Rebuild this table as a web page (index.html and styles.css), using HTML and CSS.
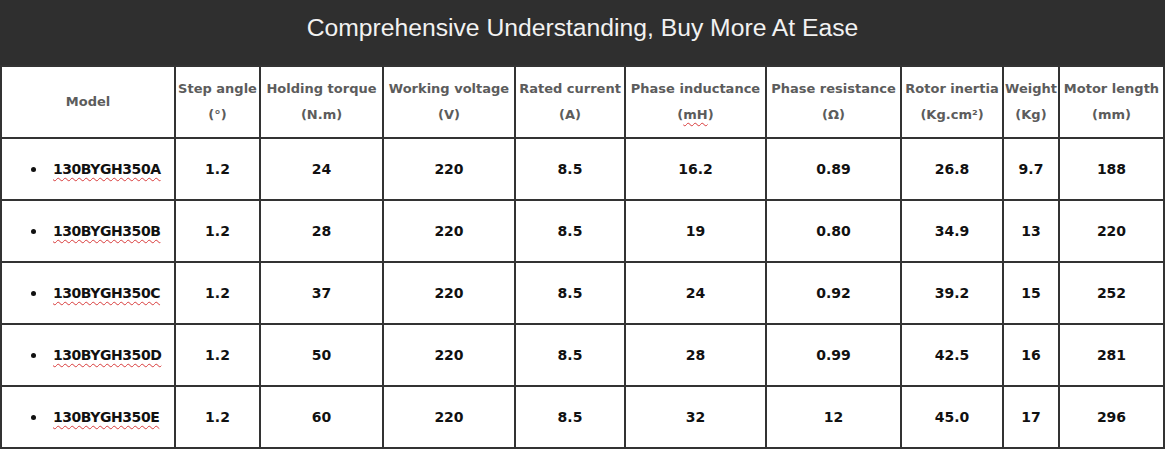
FILE: index.html
```html
<!DOCTYPE html>
<html lang="en">
<head>
<meta charset="utf-8">
<title>Motor specifications</title>
<link rel="stylesheet" href="styles.css">
</head>
<body>
<div class="spec">
  <div class="spec-title">Comprehensive Understanding, Buy More At Ease</div>
  <table class="spec-table">
    <colgroup>
      <col class="c-model"><col class="c-step"><col class="c-hold"><col class="c-volt"><col class="c-cur">
      <col class="c-ind"><col class="c-res"><col class="c-rot"><col class="c-wt"><col class="c-len">
    </colgroup>
    <thead>
      <tr>
        <th>Model</th>
        <th>Step angle<br>(°)</th>
        <th>Holding torque<br>(N.m)</th>
        <th>Working voltage<br>(V)</th>
        <th>Rated current<br>(A)</th>
        <th>Phase inductance<br>(<span class="spell">mH</span>)</th>
        <th>Phase resistance<br>(Ω)</th>
        <th>Rotor inertia<br>(Kg.cm²)</th>
        <th>Weight<br>(Kg)</th>
        <th>Motor length<br>(mm)</th>
      </tr>
    </thead>
    <tbody>
      <tr>
        <td class="model"><ul class="model-list"><li><span class="spell">130BYGH350A</span></li></ul></td>
        <td>1.2</td><td>24</td><td>220</td><td>8.5</td><td>16.2</td><td>0.89</td><td>26.8</td><td>9.7</td><td>188</td>
      </tr>
      <tr>
        <td class="model"><ul class="model-list"><li><span class="spell">130BYGH350B</span></li></ul></td>
        <td>1.2</td><td>28</td><td>220</td><td>8.5</td><td>19</td><td>0.80</td><td>34.9</td><td>13</td><td>220</td>
      </tr>
      <tr>
        <td class="model"><ul class="model-list"><li><span class="spell">130BYGH350C</span></li></ul></td>
        <td>1.2</td><td>37</td><td>220</td><td>8.5</td><td>24</td><td>0.92</td><td>39.2</td><td>15</td><td>252</td>
      </tr>
      <tr>
        <td class="model"><ul class="model-list"><li><span class="spell">130BYGH350D</span></li></ul></td>
        <td>1.2</td><td>50</td><td>220</td><td>8.5</td><td>28</td><td>0.99</td><td>42.5</td><td>16</td><td>281</td>
      </tr>
      <tr>
        <td class="model"><ul class="model-list"><li><span class="spell">130BYGH350E</span></li></ul></td>
        <td>1.2</td><td>60</td><td>220</td><td>8.5</td><td>32</td><td>12</td><td>45.0</td><td>17</td><td>296</td>
      </tr>
    </tbody>
  </table>
</div>
</body>
</html>
```

FILE: styles.css
```css
html, body {
  margin: 0;
  padding: 0;
  background: #ffffff;
}

.spec {
  width: 1165px;
}

.spec-title {
  height: 65px;
  background: #2f2f2f;
  color: #f2f2f2;
  font-family: "Liberation Sans", Arial, sans-serif;
  font-size: 24.7px;
  display: flex;
  align-items: center;
  justify-content: center;
  padding-bottom: 10px;
  box-sizing: border-box;
}

.spec-table {
  width: 1165px;
  border-collapse: collapse;
  table-layout: fixed;
  font-family: "DejaVu Sans", Verdana, sans-serif;
  font-weight: bold;
}

.c-model { width: 174px; }
.c-step { width: 85px; }
.c-hold { width: 123px; }
.c-volt { width: 132px; }
.c-cur { width: 110px; }
.c-ind { width: 141px; }
.c-res { width: 135px; }
.c-rot { width: 102px; }
.c-wt { width: 56px; }
.c-len { width: 105px; }

.spec-table th,
.spec-table td {
  border: 2px solid #333333;
  padding: 0;
  text-align: center;
  vertical-align: middle;
}

.spec-table th {
  height: 70px;
  font-size: 13px;
  line-height: 26px;
  color: #5c5c5c;
  white-space: nowrap;
}

.spec-table td {
  height: 60px;
  font-size: 14px;
  color: #111111;
}

.spec-table td.model {
  text-align: left;
}

.model-list {
  margin: 0;
  padding-left: 29px;
  list-style: none;
}

.model-list li {
  display: flex;
  align-items: center;
  letter-spacing: -0.45px;
}

.model-list li::before {
  content: "";
  width: 5px;
  height: 5px;
  border-radius: 50%;
  background: #111111;
  margin-right: 17px;
  flex: none;
}

.spell {
  text-decoration: underline wavy #d83b3b;
  text-decoration-thickness: 1px;
  text-underline-offset: 3px;
  text-decoration-skip-ink: none;
}
```
